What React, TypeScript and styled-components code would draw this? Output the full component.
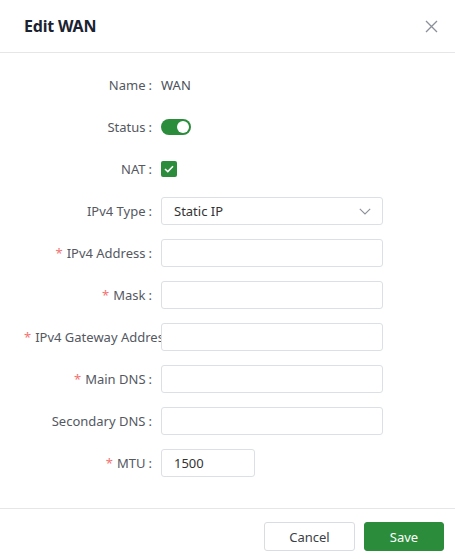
import React from "react";
import styled, { createGlobalStyle } from "styled-components";

const Global = createGlobalStyle`
  html, body { margin: 0; padding: 0; background: #fff; }
  body { font-family: "Noto Sans", "Open Sans", Arial, sans-serif; }
  * { box-sizing: border-box; }
`;

const Dialog = styled.div`
  width: 455px;
  height: 559px;
  display: flex;
  flex-direction: column;
  background: #fff;
  overflow: hidden;
`;

const Header = styled.div`
  height: 53px;
  flex: none;
  display: flex;
  align-items: center;
  justify-content: space-between;
  padding: 0 17px 0 24px;
  border-bottom: 1px solid #e6e6e8;
`;

const Title = styled.h1`
  margin: 0;
  font-size: 16px;
  font-weight: 700;
  color: #1b2230;
  letter-spacing: -0.2px;
`;

const CloseButton = styled.button`
  border: none;
  background: none;
  padding: 0;
  width: 14px;
  height: 14px;
  display: flex;
  align-items: center;
  justify-content: center;
  cursor: pointer;
`;

const Body = styled.div`
  flex: 1;
  display: flex;
  flex-direction: column;
  gap: 14px;
  padding: 18px 0 0 24px;
`;

const Row = styled.div`
  display: flex;
  align-items: center;
  height: 28px;
`;

const Label = styled.label`
  width: 137px;
  flex: none;
  text-align: right;
  white-space: nowrap;
  overflow: hidden;
  font-size: 13px;
  color: #54585f;
  &::after {
    content: ":";
    margin: 0 9px 0 3px;
  }
`;

const Required = styled.span`
  color: #f47272;
  margin-right: 4px;
`;

const Value = styled.span`
  font-size: 13px;
  color: #4a4f57;
`;

const Input = styled.input<{ $w?: number }>`
  width: ${(p) => p.$w ?? 222}px;
  height: 28px;
  border: 1px solid #dcdfe4;
  border-radius: 3px;
  padding: 0 12px;
  font-family: inherit;
  font-size: 13px;
  color: #333;
  outline: none;
  background: #fff;
`;

const Select = styled.div`
  width: 222px;
  height: 28px;
  border: 1px solid #dcdfe4;
  border-radius: 3px;
  padding: 0 11px 0 12px;
  display: flex;
  align-items: center;
  justify-content: space-between;
  font-size: 13px;
  color: #333;
`;

const Switch = styled.div`
  width: 30px;
  height: 16px;
  border-radius: 8px;
  background: #2b8c3b;
  display: flex;
  align-items: center;
  justify-content: flex-end;
  padding: 0 2px;
  &::after {
    content: "";
    width: 12px;
    height: 12px;
    border-radius: 50%;
    background: #fff;
  }
`;

const Checkbox = styled.div`
  width: 16px;
  height: 16px;
  border-radius: 2px;
  background: #2b8c3b;
  display: flex;
  align-items: center;
  justify-content: center;
`;

const Footer = styled.div`
  height: 51px;
  flex: none;
  border-top: 1px solid #e6e6e8;
  display: flex;
  justify-content: flex-end;
  align-items: flex-start;
  gap: 9px;
  padding: 13px 11px 0 0;
`;

const Button = styled.button<{ $primary?: boolean; $w: number }>`
  width: ${(p) => p.$w}px;
  height: 29px;
  border-radius: 3px;
  font-family: inherit;
  font-size: 13px;
  cursor: pointer;
  border: 1px solid ${(p) => (p.$primary ? "#2b8c3b" : "#d9dce1")};
  background: ${(p) => (p.$primary ? "#2b8c3b" : "#fff")};
  color: ${(p) => (p.$primary ? "#fff" : "#3a3f47")};
`;

type FieldProps = { label: string; required?: boolean; children: React.ReactNode };

const Field = ({ label, required, children }: FieldProps) => (
  <Row>
    <Label>
      {required && <Required>*</Required>}
      {label}
    </Label>
    {children}
  </Row>
);

export default function App() {
  return (
    <>
      <Global />
      <Dialog>
        <Header>
          <Title>Edit WAN</Title>
          <CloseButton aria-label="Close">
            <svg width="13" height="13" viewBox="0 0 13 13">
              <path d="M1 1L12 12M12 1L1 12" stroke="#8a8f99" strokeWidth="1.3" fill="none" />
            </svg>
          </CloseButton>
        </Header>
        <Body>
          <Field label="Name">
            <Value>WAN</Value>
          </Field>
          <Field label="Status">
            <Switch />
          </Field>
          <Field label="NAT">
            <Checkbox>
              <svg width="10" height="8" viewBox="0 0 10 8">
                <path d="M1 4L3.8 6.6L9 1.2" stroke="#fff" strokeWidth="1.6" fill="none" />
              </svg>
            </Checkbox>
          </Field>
          <Field label="IPv4 Type">
            <Select>
              <span>Static IP</span>
              <svg width="12" height="7" viewBox="0 0 12 7">
                <path d="M0.8 0.8L6 6L11.2 0.8" stroke="#8c9099" strokeWidth="1.1" fill="none" />
              </svg>
            </Select>
          </Field>
          <Field label="IPv4 Address" required>
            <Input />
          </Field>
          <Field label="Mask" required>
            <Input />
          </Field>
          <Field label="IPv4 Gateway Address" required>
            <Input />
          </Field>
          <Field label="Main DNS" required>
            <Input />
          </Field>
          <Field label="Secondary DNS">
            <Input />
          </Field>
          <Field label="MTU" required>
            <Input $w={94} defaultValue="1500" />
          </Field>
        </Body>
        <Footer>
          <Button $w={91}>Cancel</Button>
          <Button $w={80} $primary>
            Save
          </Button>
        </Footer>
      </Dialog>
    </>
  );
}
